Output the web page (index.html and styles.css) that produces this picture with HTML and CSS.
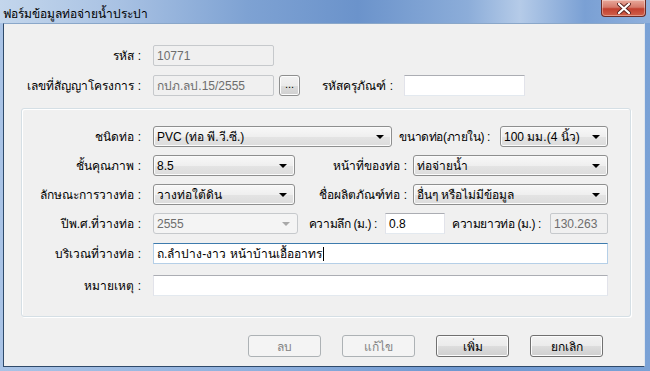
FILE: index.html
```html
<!DOCTYPE html>
<html lang="th">

<head>
  <meta charset="UTF-8">
  <title>ฟอร์มข้อมูลท่อจ่ายน้ำประปา</title>
  <link rel="stylesheet" href="styles.css">
</head>

<body>
  <div class="window">
    <!-- Title bar -->
    <div class="titlebar">
      <span class="title">ฟอร์มข้อมูลท่อจ่ายน้ำประปา</span>
      <div class="close-btn">
        <svg width="14" height="11" viewBox="0 0 14 11">
          <path d="M2 1 L12 10 M12 1 L2 10" stroke="#5a2420" stroke-width="4" stroke-linecap="round"/>
          <path d="M2 1 L12 10 M12 1 L2 10" stroke="#fff" stroke-width="2.2" stroke-linecap="round"/>
        </svg>
      </div>
    </div>

    <!-- Client area -->
    <div class="client">
      <div class="top-rows">
        <div class="row">
          <label class="lbl lbl-top">รหัส :</label>
          <div class="field disabled w-code">10771</div>
        </div>
        <div class="row">
          <label class="lbl lbl-top">เลขที่สัญญาโครงการ :</label>
          <div class="field disabled w-code">กปภ.ลป.15/2555</div>
          <div class="btn btn-dots">...</div>
          <label class="lbl lbl-asset">รหัสครุภัณฑ์ :</label>
          <div class="field w-asset"></div>
        </div>
      </div>

      <div class="group">
        <div class="row">
          <label class="lbl lbl-grp">ชนิดท่อ :</label>
          <div class="combo w-type"><span>PVC (ท่อ พี.วี.ซี.)</span><i class="arrow"></i></div>
          <label class="lbl lbl-size tight">ขนาดท่อ(ภายใน) :</label>
          <div class="combo w-size"><span>100 มม.(4 นิ้ว)</span><i class="arrow"></i></div>
        </div>
        <div class="row">
          <label class="lbl lbl-grp">ชั้นคุณภาพ :</label>
          <div class="combo w-short"><span>8.5</span><i class="arrow"></i></div>
          <label class="lbl lbl-mid">หน้าที่ของท่อ :</label>
          <div class="combo w-long"><span>ท่อจ่ายน้ำ</span><i class="arrow"></i></div>
        </div>
        <div class="row">
          <label class="lbl lbl-grp">ลักษณะการวางท่อ :</label>
          <div class="combo w-short"><span>วางท่อใต้ดิน</span><i class="arrow"></i></div>
          <label class="lbl lbl-mid">ชื่อผลิตภัณฑ์ท่อ :</label>
          <div class="combo w-long"><span>อื่นๆ หรือไม่มีข้อมูล</span><i class="arrow"></i></div>
        </div>
        <div class="row">
          <label class="lbl lbl-grp">ปีพ.ศ.ที่วางท่อ :</label>
          <div class="combo disabled w-year"><span>2555</span><i class="arrow"></i></div>
          <label class="lbl lbl-depth tight">ความลึก (ม.) :</label>
          <div class="field w-depth">0.8</div>
          <label class="lbl lbl-len tight">ความยาวท่อ (ม.) :</label>
          <div class="field disabled w-len">130.263</div>
        </div>
        <div class="row row-area">
          <label class="lbl lbl-grp">บริเวณที่วางท่อ :</label>
          <div class="field focused w-full">ถ.ลำปาง-งาว หน้าบ้านเอื้ออาทร<span class="caret"></span></div>
        </div>
        <div class="row row-note">
          <label class="lbl lbl-grp">หมายเหตุ :</label>
          <div class="field w-full"></div>
        </div>
      </div>

      <div class="buttons">
        <div class="btn disabled">ลบ</div>
        <div class="btn disabled">แก้ไข</div>
        <div class="btn">เพิ่ม</div>
        <div class="btn">ยกเลิก</div>
      </div>
    </div>
  </div>
</body>

</html>
```

FILE: styles.css
```css
/* General */
body {
    margin: 0;
    font-family: "Liberation Sans", Tahoma, "DejaVu Sans", sans-serif;
    font-size: 12px;
    color: #000;
}

/* Window frame */
.window {
    width: 650px;
    height: 371px;
    display: flex;
    flex-direction: column;
    box-sizing: border-box;
    padding: 0 5px 4px 3px;
    background: linear-gradient(to right, #a9c3e6 0%, #8fb0dd 40%, #6f98d0 70%, #7aa2d6 100%);
}

/* Title bar */
.titlebar {
    height: 23px;
    margin: 0 -5px 0 -3px;
    display: flex;
    align-items: flex-start;
    background: linear-gradient(to right, #c3d6ec 0%, #a9c2e3 18%, #7ea2d3 38%, #6b93cb 55%, #8cadd9 72%, #b5cbe8 80%, #7aa0d4 90%, #8fb0dc 100%);
}

.title {
    padding: 4px 0 0 3px;
    font-size: 12px;
    color: #000;
}

.close-btn {
    margin-left: auto;
    margin-right: 4px;
    width: 43px;
    height: 16px;
    display: flex;
    justify-content: center;
    align-items: center;
    border: 1px solid #6b2c27;
    border-top: none;
    border-radius: 0 0 4px 4px;
    background: linear-gradient(#e9a99b 0%, #d57a6b 45%, #c2402f 55%, #d0604a 100%);
    box-shadow: inset 0 0 0 1px rgba(255, 255, 255, 0.35);
}

/* Client area */
.client {
    flex: 1;
    background-color: #f0f0f0;
    border: 1px solid #2f4a6a;
    border-top-color: #8aa7c9;
    border-right-color: #dfe6ee;
}

.row {
    display: flex;
    align-items: center;
    height: 21px;
}

.top-rows {
    padding-top: 21px;
    display: flex;
    flex-direction: column;
    gap: 9px;
}

/* Labels */
.lbl {
    text-align: right;
    white-space: nowrap;
    flex-shrink: 0;
}

.lbl.tight {
    letter-spacing: -0.4px;
}

.lbl-top { width: 137px; margin-right: 12px; }
.lbl-asset { width: 93px; margin-right: 11px; }
.lbl-grp { width: 119px; margin-right: 12px; }
.lbl-size { width: 98px; margin-right: 10px; }
.lbl-mid { width: 112px; margin-right: 6px; }
.lbl-depth { width: 79px; margin-right: 8px; }
.lbl-len { width: 96px; margin-right: 9px; }

/* Text fields */
.field {
    height: 21px;
    box-sizing: border-box;
    display: flex;
    align-items: center;
    padding: 0 3px;
    background-color: #fff;
    border: 1px solid #e2e3ea;
    border-top-color: #abadb3;
    border-bottom-color: #e3e9ef;
    white-space: nowrap;
    flex-shrink: 0;
}

.field.disabled {
    background-color: #f0f0f0;
    color: #6d6d6d;
    border: 1px solid #c6c9cc;
    border-radius: 2px;
}

.field.focused {
    border-color: #b5cfe7;
    border-top-color: #3d7bad;
}

.caret {
    display: inline-block;
    width: 1px;
    height: 14px;
    margin-left: 1px;
    background-color: #000;
}

.w-code { width: 121px; }
.w-asset { width: 121px; }
.w-depth { width: 60px; }
.w-len { width: 58px; }
.w-full { width: 455px; }

/* Combo boxes */
.combo {
    height: 21px;
    box-sizing: border-box;
    display: flex;
    align-items: center;
    padding-left: 3px;
    border: 1px solid #8e8f8f;
    border-radius: 3px;
    background: linear-gradient(#f8f8f8 0%, #efefef 50%, #e4e4e4 51%, #dcdcdc 100%);
    box-shadow: inset 0 0 0 1px #fbfbfb;
    white-space: nowrap;
    flex-shrink: 0;
}

.combo .arrow {
    margin-left: auto;
    margin-right: 7px;
    width: 0;
    height: 0;
    border-left: 4px solid transparent;
    border-right: 4px solid transparent;
    border-top: 4px solid #000;
}

.combo.disabled {
    background: #f4f4f4;
    border-color: #c6c9cc;
    color: #6d6d6d;
    box-shadow: none;
}

.combo.disabled .arrow {
    border-top-color: #a8a8a8;
}

.w-type { width: 239px; }
.w-size { width: 108px; }
.w-short { width: 142px; }
.w-long { width: 195px; }
.w-year { width: 145px; }

/* Group box */
.group {
    width: 610px;
    box-sizing: border-box;
    margin: 12px 0 0 17px;
    padding: 17px 0 20px 0;
    border: 1px solid #d5dfe5;
    border-radius: 3px;
    box-shadow: inset 1px 1px 0 #fff, 1px 1px 0 #fff;
    display: flex;
    flex-direction: column;
    gap: 8px;
}

.group .row-area { margin-top: 1px; }
.group .row-note { margin-top: 3px; }

/* Buttons */
.btn {
    height: 22px;
    width: 73px;
    box-sizing: border-box;
    display: flex;
    justify-content: center;
    align-items: center;
    border: 1px solid #707070;
    border-radius: 3px;
    background: linear-gradient(#f2f2f2 0%, #ebebeb 50%, #dddddd 51%, #cfcfcf 100%);
    box-shadow: inset 0 0 0 1px #fcfcfc;
    flex-shrink: 0;
}

.btn.disabled {
    background: #f4f4f4;
    border-color: #adb2b5;
    color: #838383;
    box-shadow: none;
}

.btn-dots {
    width: 21px;
    height: 21px;
    margin: 0 0 0 5px;
    padding-bottom: 3px;
    border-color: #8e8f8f;
    font-size: 11px;
}

.buttons {
    display: flex;
    gap: 21px;
    margin: 18px 0 0 244px;
}
```
